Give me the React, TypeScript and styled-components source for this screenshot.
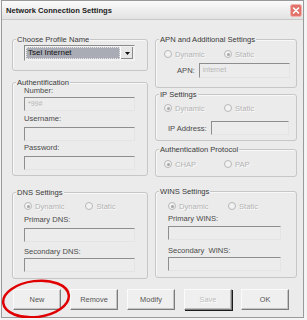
import styled, { createGlobalStyle } from "styled-components";

const GlobalStyle = createGlobalStyle`
  body {
    margin: 0;
    background: #f4f4f4;
    font-family: "Liberation Sans", Arial, sans-serif;
  }
`;

const Window = styled.div`
  width: 303px;
  height: 318px;
  margin-left: 1px;
  box-sizing: border-box;
  border: 1px solid #9a9a9a;
  background: #ebebeb;
  display: flex;
  flex-direction: column;
  font-size: 7.6px;
  color: #404040;
`;

const TitleBar = styled.div`
  height: 18px;
  display: flex;
  align-items: center;
  justify-content: space-between;
  padding: 0 1px 0 4px;
  background: linear-gradient(#fbfbfb, #e2e2e2);
  border-bottom: 1px solid #c9c9c9;
`;

const Title = styled.span`
  font-weight: bold;
  font-size: 7.6px;
  color: #222;
`;

const Body = styled.div`
  padding: 19px 6px 0 10px;
  display: flex;
  flex-direction: column;
`;

const Columns = styled.div`
  display: grid;
  grid-template-columns: 136px 142px;
  column-gap: 7px;
  align-items: start;
`;

const Column = styled.div`
  display: flex;
  flex-direction: column;
`;

const Group = styled.div<{ $mt?: number; $pad: string }>`
  position: relative;
  margin-top: ${(p) => p.$mt ?? 0}px;
  padding: ${(p) => p.$pad};
  border: 1px solid #c6c6c6;
  border-radius: 3px;
  box-shadow: inset 1px 1px 0 #f8f8f8;
  display: flex;
  flex-direction: column;
`;

const Legend = styled.span`
  position: absolute;
  top: -5px;
  left: 3px;
  padding: 0 1px;
  line-height: 9px;
  background: #ebebeb;
  color: #3a3a3a;
  white-space: nowrap;
`;

const Label = styled.div<{ $mt?: number }>`
  height: 10px;
  line-height: 10px;
  margin-top: ${(p) => p.$mt ?? 0}px;
  color: #4a4a4a;
  white-space: nowrap;
`;

const Input = styled.div<{ $mt?: number; $w: number; $h?: number }>`
  box-sizing: border-box;
  width: ${(p) => p.$w}px;
  height: ${(p) => p.$h ?? 14}px;
  margin-top: ${(p) => p.$mt ?? 0}px;
  border: 1px solid;
  border-color: #8e8e8e #e4e4e4 #e4e4e4 #8e8e8e;
  background: #ececec;
  color: #b8b8b8;
  padding-left: 3px;
  line-height: 12px;
  font-size: 7px;
`;

const Select = styled.div`
  box-sizing: border-box;
  width: 111px;
  height: 16px;
  display: flex;
  border: 1px solid;
  border-color: #8a8a8a #f2f2f2 #f2f2f2 #8a8a8a;
  background: #f2f2f2;
  padding: 1px;
`;

const SelectValue = styled.div`
  flex: 1;
  background: #a9abb5;
  outline: 1px dotted #e6e6e6;
  outline-offset: -1px;
  color: #111;
  font-size: 8px;
  line-height: 12px;
  padding-left: 2px;
`;

const SelectArrow = styled.div`
  width: 12px;
  display: flex;
  align-items: center;
  justify-content: center;
  background: #e6e6e6;
  border-left: 1px solid #fff;
  box-shadow: inset -1px -1px 0 #8a8a8a;
`;

const RadioRow = styled.div<{ $pl: number }>`
  display: flex;
  height: 10px;
  padding-left: ${(p) => p.$pl}px;
`;

const RadioItem = styled.div<{ $w: number }>`
  width: ${(p) => p.$w}px;
  display: flex;
  align-items: center;
  gap: 3px;
  color: #b4b4b4;
  text-shadow: 1px 1px 0 #fafafa;
`;

const Circle = styled.span<{ $on: boolean }>`
  box-sizing: border-box;
  width: 8px;
  height: 8px;
  border-radius: 50%;
  border: 1px solid #b8b8b8;
  background: #f2f2f2;
  display: flex;
  align-items: center;
  justify-content: center;
  &::after {
    content: "";
    width: 3px;
    height: 3px;
    border-radius: 50%;
    background: ${(p) => (p.$on ? "#a6a6a6" : "transparent")};
  }
`;

const InlineField = styled.div<{ $mt: number; $pl: number; $h: number }>`
  display: flex;
  align-items: center;
  gap: 4px;
  margin-top: ${(p) => p.$mt}px;
  padding-left: ${(p) => p.$pl}px;
  height: ${(p) => p.$h}px;
`;

const InlineLabel = styled.span`
  color: #4a4a4a;
  white-space: nowrap;
`;

const ButtonRow = styled.div`
  position: relative;
  display: flex;
  gap: 9px;
  margin-top: 10px;
  padding-left: 1px;
`;

const Button = styled.div<{ $disabled?: boolean; $default?: boolean }>`
  box-sizing: border-box;
  width: 48px;
  height: 21px;
  display: flex;
  align-items: center;
  justify-content: center;
  background: #efefef;
  border: 1px solid;
  border-color: #fbfbfb #7c7c7c #7c7c7c #fbfbfb;
  box-shadow: ${(p) =>
    p.$default ? "1px 1px 0 #1c1c1c, inset -1px -1px 0 #bdbdbd" : "inset -1px -1px 0 #c4c4c4"};
  color: ${(p) => (p.$disabled ? "#bdbdbd" : "#555")};
  text-shadow: ${(p) => (p.$disabled ? "1px 1px 0 #fff" : "none")};
  font-size: 7.4px;
`;

const Mark = styled.svg`
  position: absolute;
  left: -11px;
  top: -12px;
  pointer-events: none;
`;

type RadioProps = { label: string; on: boolean; w: number };
const Radio = (props: RadioProps) => (
  <RadioItem $w={props.w}>
    <Circle $on={props.on} />
    <span>{props.label}</span>
  </RadioItem>
);

export default function App() {
  return (
    <>
      <GlobalStyle />
      <Window>
        <TitleBar>
          <Title>Network Connection Settings</Title>
          <svg width="12" height="13" viewBox="0 0 12 13">
            <rect x="0.5" y="0.5" width="11" height="12" rx="2" fill="#e2736b" stroke="#f1b2ad" />
            <path d="M3.5 4 L8.5 9 M8.5 4 L3.5 9" stroke="#fff" strokeWidth="1.6" strokeLinecap="round" />
          </svg>
        </TitleBar>
        <Body>
          <Columns>
            <Column>
              <Group $pad="5px 12px 9px 11px">
                <Legend>Choose Profile Name</Legend>
                <Select>
                  <SelectValue>Tsel Internet</SelectValue>
                  <SelectArrow>
                    <svg width="5" height="3" viewBox="0 0 5 3">
                      <path d="M0 0 H5 L2.5 3 Z" fill="#111" />
                    </svg>
                  </SelectArrow>
                </Select>
              </Group>

              <Group $mt={11} $pad="3px 12px 5px 11px">
                <Legend>Authentification</Legend>
                <Label>Number:</Label>
                <Input $mt={1} $w={111}>*99#</Input>
                <Label $mt={3}>Username:</Label>
                <Input $mt={3} $w={111} />
                <Label $mt={2}>Password:</Label>
                <Input $mt={3} $w={111} />
              </Group>

              <Group $mt={16} $pad="8px 12px 6px 11px">
                <Legend>DNS Settings</Legend>
                <RadioRow $pl={-4}>
                  <Radio label="Dynamic" on w={62} />
                  <Radio label="Static" on={false} w={50} />
                </RadioRow>
                <Label $mt={4}>Primary DNS:</Label>
                <Input $mt={3} $w={111} />
                <Label $mt={5}>Secondary DNS:</Label>
                <Input $mt={1} $w={111} />
              </Group>
            </Column>

            <Column>
              <Group $pad="9px 4px 9px 0">
                <Legend>APN and Additional Settings</Legend>
                <RadioRow $pl={8}>
                  <Radio label="Dynamic" on={false} w={60} />
                  <Radio label="Static" on w={50} />
                </RadioRow>
                <InlineField $mt={4} $pl={21} $h={15}>
                  <InlineLabel>APN:</InlineLabel>
                  <Input $w={91} $h={15}>internet</Input>
                </InlineField>
              </Group>

              <Group $mt={6} $pad="8px 4px 5px 0">
                <Legend>IP Settings</Legend>
                <RadioRow $pl={8}>
                  <Radio label="Dynamic" on w={60} />
                  <Radio label="Static" on={false} w={50} />
                </RadioRow>
                <InlineField $mt={8} $pl={12} $h={14}>
                  <InlineLabel>IP Address:</InlineLabel>
                  <Input $w={78} />
                </InlineField>
              </Group>

              <Group $mt={8} $pad="9px 4px 7px 0">
                <Legend>Authentication Protocol</Legend>
                <RadioRow $pl={8}>
                  <Radio label="CHAP" on w={60} />
                  <Radio label="PAP" on={false} w={50} />
                </RadioRow>
              </Group>

              <Group $mt={14} $pad="9px 4px 6px 12px">
                <Legend>WINS Settings</Legend>
                <RadioRow $pl={-4}>
                  <Radio label="Dynamic" on w={60} />
                  <Radio label="Static" on={false} w={50} />
                </RadioRow>
                <Label $mt={3}>Primary WINS:</Label>
                <Input $mt={2} $w={113} />
                <Label $mt={6}>Secondary&nbsp; WINS:</Label>
                <Input $mt={1} $w={113} />
              </Group>
            </Column>
          </Columns>

          <ButtonRow>
            <Button>New</Button>
            <Button>Remove</Button>
            <Button>Modify</Button>
            <Button $disabled $default>
              Save
            </Button>
            <Button>OK</Button>
            <Mark width="72" height="42" viewBox="0 0 72 42">
              <ellipse
                cx="35"
                cy="22"
                rx="33"
                ry="18"
                transform="rotate(-7 35 22)"
                fill="none"
                stroke="#e00000"
                strokeWidth="2.5"
              />
            </Mark>
          </ButtonRow>
        </Body>
      </Window>
    </>
  );
}
